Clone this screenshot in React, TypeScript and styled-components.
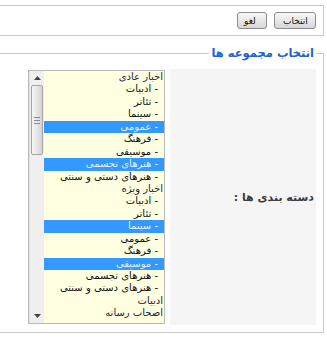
import React from "react";
import styled, { createGlobalStyle } from "styled-components";

const GlobalStyle = createGlobalStyle`
  html, body { margin: 0; padding: 0; background: #ffffff; }
  body { font-family: "DejaVu Sans", "Liberation Sans", sans-serif; direction: rtl; }
  * { box-sizing: border-box; }
`;

const Page = styled.div`
  width: 327px;
  height: 342px;
  overflow: hidden;
  padding-top: 5px;
`;

const ActionBar = styled.div`
  height: 31px;
  margin: 0 3px 0 -20px;
  border: 1px solid #cacaca;
  display: flex;
  align-items: flex-start;
  gap: 7px;
  padding: 6px 7px 0 0;
`;

const Button = styled.button<{ $w: number; $pl: number }>`
  width: ${(p) => p.$w}px;
  height: 17px;
  margin: 0;
  padding: 0 0 0 ${(p) => p.$pl}px;
  border: 1px solid #8d8d8d;
  border-radius: 3px;
  background: linear-gradient(#f8f8f8, #e4e4e4 60%, #d6d6d6);
  font-family: "DejaVu Sans", sans-serif;
  font-size: 9px;
  line-height: 14px;
  color: #111;
  text-align: left;
  white-space: nowrap;
  overflow: hidden;
`;

const Group = styled.fieldset`
  margin: 10px 3px 0 -20px;
  padding: 0 7px 7px 0;
  border: 1px solid #cacaca;
  min-width: 0;
`;

const Legend = styled.legend`
  padding: 0 2px;
  margin: 0;
  font-size: 11.5px;
  line-height: 14px;
  font-weight: bold;
  color: #1d62d6;
`;

const Row = styled.div`
  display: flex;
  align-items: flex-start;
  gap: 5px;
  padding-top: 9px;
`;

const LabelCell = styled.div`
  width: 146px;
  height: 256px;
  background: #f5f5f5;
  display: flex;
  align-items: center;
  padding-right: 2px;
  font-size: 11px;
  font-weight: bold;
  color: #3a3a3a;
`;

const ListBox = styled.div`
  width: 137px;
  height: 254px;
  margin-top: 1px;
  border: 1px solid #b9b9b9;
  background: #ffffe1;
  display: flex;
  overflow: hidden;
`;

const Options = styled.div`
  flex: 1;
  overflow: hidden;
`;

const Option = styled.div<{ $child?: boolean; $selected?: boolean }>`
  height: 12.45px;
  line-height: 12.45px;
  font-size: 10px;
  white-space: nowrap;
  padding-right: ${(p) => (p.$child ? 6 : 1)}px;
  background: ${(p) => (p.$selected ? "#3399ff" : "transparent")};
  color: ${(p) => (p.$selected ? "#e6efff" : p.$child ? "#111" : "#1c1c3c")};
`;

const ScrollTrack = styled.div`
  width: 15px;
  background: #efefef;
  border-left: 1px solid #e2e2e2;
  display: flex;
  flex-direction: column;
  align-items: center;
`;

const ArrowButton = styled.div`
  height: 14px;
  width: 100%;
  display: flex;
  align-items: center;
  justify-content: center;
`;

const Thumb = styled.div`
  width: 12px;
  height: 70px;
  border: 1px solid #a5a5a5;
  border-radius: 2px;
  background: linear-gradient(to right, #f7f7f7, #e3e3e3 60%, #d2d2d2);
  display: flex;
  flex-direction: column;
  align-items: center;
  justify-content: center;
  gap: 2px;
`;

const Grip = styled.span`
  display: block;
  width: 6px;
  height: 1px;
  background: #8a8a8a;
`;

const Spacer = styled.div`
  flex: 1;
`;

type Item = { t: string; c?: boolean; s?: boolean };

const items: Item[] = [
  { t: "اخبار عادی" },
  { t: "- ادبیات", c: true },
  { t: "- تئاتر", c: true },
  { t: "- سینما", c: true },
  { t: "- عمومی", c: true, s: true },
  { t: "- فرهنگ", c: true },
  { t: "- موسیقی", c: true },
  { t: "- هنرهای تجسمی", c: true, s: true },
  { t: "- هنرهای دستی و سنتی", c: true },
  { t: "اخبار ویژه" },
  { t: "- ادبیات", c: true },
  { t: "- تئاتر", c: true },
  { t: "- سینما", c: true, s: true },
  { t: "- عمومی", c: true },
  { t: "- فرهنگ", c: true },
  { t: "- موسیقی", c: true, s: true },
  { t: "- هنرهای تجسمی", c: true },
  { t: "- هنرهای دستی و سنتی", c: true },
  { t: "ادبیات" },
  { t: "اصحاب رسانه" },
];

const Arrow = ({ down }: { down?: boolean }) => (
  <svg width="7" height="4" viewBox="0 0 7 4">
    <polygon points={down ? "0,0 7,0 3.5,4" : "3.5,0 7,4 0,4"} fill="#444" />
  </svg>
);

export default function App() {
  return (
    <>
      <GlobalStyle />
      <Page>
        <ActionBar>
          <Button $w={42} $pl={8}>انتخاب</Button>
          <Button $w={30} $pl={6}>لغو</Button>
        </ActionBar>
        <Group>
          <Legend>انتخاب مجموعه ها</Legend>
          <Row>
            <LabelCell>دسته بندی ها :</LabelCell>
            <ListBox>
              <Options>
                {items.map((it, i) => (
                  <Option key={i} $child={it.c} $selected={it.s}>
                    {it.t}
                  </Option>
                ))}
              </Options>
              <ScrollTrack>
                <ArrowButton>
                  <Arrow />
                </ArrowButton>
                <Thumb>
                  <Grip />
                  <Grip />
                  <Grip />
                </Thumb>
                <Spacer />
                <ArrowButton>
                  <Arrow down />
                </ArrowButton>
              </ScrollTrack>
            </ListBox>
          </Row>
        </Group>
      </Page>
    </>
  );
}
